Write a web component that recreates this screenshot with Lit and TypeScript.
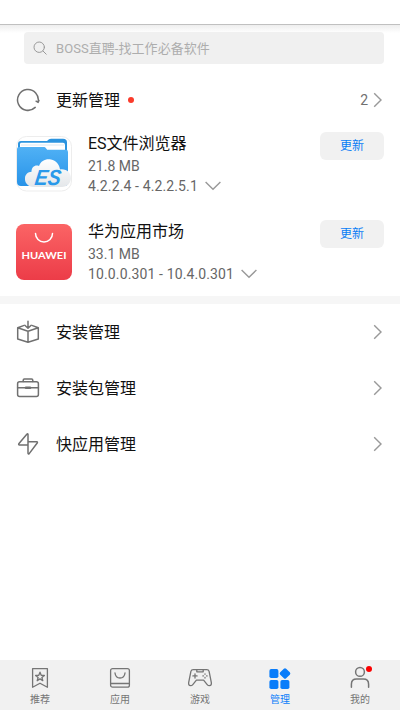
import { LitElement, html, css, svg } from "lit";
import { customElement, property } from "lit/decorators.js";

const line = (size: number, body: unknown, w = 1.3) => html`<svg
  width=${size} height=${size} viewBox="0 0 ${size} ${size}" fill="none"
  stroke="currentColor" stroke-width=${w} stroke-linecap="round" stroke-linejoin="round">${body}</svg>`;

const icons = {
  search: line(16, svg`<circle cx="7.2" cy="7.2" r="5.2"/><path d="M11 11L14.2 14.2"/>`, 1),
  refresh: line(24, svg`<path d="M19.2 19.4A10.4 10.4 0 1 1 22.1 14.2M20.1 13.2L22.1 14.4L22.9 12.4"/>`, 1.5),
  box: line(24, svg`<path d="M7.5 5.6L1.7 7.8V19L12 22.2L22.3 19V7.8L16.5 5.6M1.7 7.8L12 11.2L22.3 7.8M12 11.2V22.2M12 1.2V8M8.8 5.2L12 8.2L15.2 5.2"/>`, 1.5),
  bag: line(24, svg`<rect x="1.6" y="5.8" width="20.8" height="14.7" rx="2"/><path d="M7.2 5.5V4.3Q7.2 3 8.4 3H15.6Q16.8 3 16.8 4.3V5.5M1.6 11.7H22.4"/><path d="M10 11.8H14" stroke-width="2.6"/>`, 1.5),
  bolt: line(24, svg`<path d="M12 2.2Q11.7 1.4 10.8 2.2L2.8 11.7Q2.3 12.8 3.5 12.9H12ZM12 9.8H20.8Q21.8 10 21.2 11L13.2 21.6Q12.3 22.4 12 21.4Z"/>`, 1.5),
};

const tabIcons = [
  line(24, svg`<path d="M4.6 2.6H19.4V21.3L12 17.2L4.6 21.3Z"/><path d="M12 6.2L13.2 9.3L16.4 9.5L13.9 11.5L14.8 14.7L12 12.9L9.2 14.7L10.1 11.5L7.6 9.5L10.8 9.3Z"/>`),
  line(24, svg`<rect x="2.6" y="2.6" width="18.8" height="18.6" rx="2"/><path d="M2.6 17.5H21.4M7 7Q7.6 12 12 12T17 7"/>`),
  line(24, svg`<path d="M5.2 3.7H18.8Q20.6 3.7 21.1 5.4L23.3 16.4Q23.7 19.7 21.5 19.7Q20.1 19.7 19.2 18.6L15.6 14.2H8.4L4.8 18.6Q3.9 19.7 2.5 19.7Q.3 19.7 .7 16.4L2.9 5.4Q3.4 3.7 5.2 3.7Z"/><path d="M8.8 4V5.8H15.2V4"/><path d="M7 7.8V12M4.9 9.9H9.1M17 7.8V8.3M17 11.5V12M14.9 9.9H15.4M18.6 9.9H19.1"/>`),
  html`<svg width="24" height="24" viewBox="0 0 24 24" fill="currentColor"><rect x="1.4" y="3.1" width="9" height="9" rx="1.8"/><rect x="1.4" y="14" width="9" height="9" rx="1.8"/><rect x="12.4" y="14" width="9" height="9" rx="1.8"/><rect x="12.8" y="3.3" width="8.4" height="8.4" rx="1.6" transform="rotate(45 17 7.5)"/></svg>`,
  line(24, svg`<circle cx="12" cy="5.9" r="4.4"/><path d="M3.4 21.3V18.3Q3.4 13.1 8.6 13.1H15.4Q20.6 13.1 20.6 18.3V21.3"/>`, 1.5),
];

const esLogo = html`<svg width="56" height="56" viewBox="0 0 56 56">
  <defs>
    <linearGradient id="folder" x2="0" y2="1"><stop stop-color="#50b1f5"/><stop offset="1" stop-color="#2893e8"/></linearGradient>
    <linearGradient id="cloud" x2="0" y2="1"><stop stop-color="#fff"/><stop offset="1" stop-color="#e4e7ea"/></linearGradient>
  </defs>
  <rect x=".5" y=".5" width="55" height="54.5" rx="10" fill="#fff" stroke="#ededed"/>
  <path d="M2 14V8Q2 5 5 5H31Q33 2.8 35 2.8H47Q51 2.8 51 6.5V16H30Z" fill="#2c94df"/>
  <path d="M4 11V8.2Q4 6.8 5.5 6.8H47Q49 6.8 49 9V15H31L29 11.5Z" fill="#fff"/>
  <path d="M5 9H48" stroke="#cfe2f0" stroke-width=".8" fill="none"/>
  <path d="M1 13Q1 11 3 11H28Q29.5 11 31.2 13.8H50Q52 13.8 52 16V47Q52 50 48 50H5Q1 50 1 46Z" fill="url(#folder)"/>
  <path d="M18 51C11.5 51 8.5 46.5 9 41.8C9.3 38.5 12 36 15.5 35.8C15.5 30.5 19.5 28.5 23 30C25 24.5 30 22.5 35 23.5C40 24.5 43.5 28.5 44 33.5C50.5 32.5 55 37 55 42C55 47 51 51 46 51Z" fill="url(#cloud)"/>
  <text transform="translate(18 48.5) skewX(-8)" textLength="26" lengthAdjust="spacingAndGlyphs" font-family="Liberation Sans, sans-serif" font-style="italic" font-weight="700" font-size="22" fill="#2999ea">ES</text>
</svg>`;

const huaweiLogo = html`<svg width="56" height="56" viewBox="0 0 56 56">
  <defs><linearGradient id="red" x2="0" y2="1"><stop stop-color="#fb6465"/><stop offset="1" stop-color="#ec3c48"/></linearGradient></defs>
  <rect width="56" height="56" rx="8" fill="url(#red)"/>
  <path d="M19.5 9.5A8.5 8.5 0 0 0 36.5 9.5" fill="none" stroke="#fff" stroke-width="1.5" stroke-linecap="round"/>
  <text x="5.5" y="35.2" textLength="45" lengthAdjust="spacingAndGlyphs" font-family="Lato, sans-serif" font-weight="700" font-size="10" fill="#fff">HUAWEI</text>
</svg>`;

const chevron = html`<svg width="10" height="16" viewBox="0 0 10 16" fill="none" stroke="#999" stroke-width="1.4"><path d="M1.2 1.2L8 8L1.2 14.8"/></svg>`;
const expand = html`<svg width="16" height="10" viewBox="0 0 16 10" fill="none" stroke="#999" stroke-width="1.4"><path d="M.6 1L8 8.3L15.4 1"/></svg>`;

@customElement("menu-row")
class MenuRow extends LitElement {
  @property() label = "";
  @property() count = "";
  @property({ attribute: false }) icon: unknown;
  static styles = css`
    :host { display: flex; align-items: center; height: 56px; padding: 0 17px 0 16px; box-sizing: border-box; color: #707070; }
    svg { display: block; flex: none; }
    .label { margin-left: 16px; padding-top: 2px; font-size: 16px; line-height: 24px; color: #111; }
    .dot { width: 6px; height: 6px; border-radius: 50%; background: #fa3b2b; margin-left: 8px; }
    .count { margin-left: auto; margin-right: 5px; font-size: 14px; }
  `;
  render() {
    return html`${this.icon}<span class="label">${this.label}</span>
      ${this.count ? html`<i class="dot"></i>` : null}
      <span class="count">${this.count}</span>${chevron}`;
  }
}

@customElement("app-item")
class AppItem extends LitElement {
  @property() name = "";
  @property() size = "";
  @property() version = "";
  @property({ attribute: false }) logo: unknown;
  static styles = css`
    :host { display: flex; height: 88px; padding: 0 16px; box-sizing: border-box; }
    svg { display: block; flex: none; }
    .logo { margin-top: 8px; }
    .info { flex: 1; margin-left: 16px; padding-top: 4px; font-size: 14px; line-height: 20px; color: #666; }
    .name { font-size: 16px; line-height: 24px; color: #111; }
    .version { display: flex; align-items: center; gap: 7px; white-space: nowrap; letter-spacing: 0.13px; }
    .version svg { margin-top: -1px; }
    button { width: 64px; height: 28px; margin: 4px 0 0; padding: 0 0 3px; border: 0; border-radius: 6px; background: #f1f1f1; color: #0a7df5; font: 400 12px Roboto, "Noto Sans CJK SC", sans-serif; }
  `;
  render() {
    return html`<div class="logo">${this.logo}</div>
      <div class="info">
        <div class="name">${this.name}</div>
        <div>${this.size}</div>
        <div class="version"><span>${this.version}</span>${expand}</div>
      </div>
      <button>更新</button>`;
  }
}

@customElement("app-root")
class AppRoot extends LitElement {
  static styles = css`
    :host { display: flex; flex-direction: column; height: 710px; background: #fff; font-family: Roboto, "Noto Sans CJK SC", sans-serif; overflow: hidden; }
    svg { display: block; flex: none; }
    .status { height: 24px; flex: none; border-bottom: 1px solid #c0c0c0; }
    .top { height: 47px; flex: none; box-sizing: border-box; padding: 7px 16px 0 24px; background: linear-gradient(#eee, #fff 8px); }
    .search { display: flex; align-items: center; gap: 8px; height: 32px; padding-left: 8px; border-radius: 4px; background: #f0f0f0; font-size: 13px; letter-spacing: 0.06px; color: #adadad; }
    .search svg { color: #999; }
    .search span { margin-top: -1px; }
    main { flex: 1; }
    .apps { height: 168px; }
    .divider { height: 8px; background: #f6f6f6; }
    nav { display: grid; grid-template-columns: repeat(5, 1fr); height: 50px; flex: none; background: #f1f1f1; color: #757575; }
    .tab { position: relative; display: flex; flex-direction: column; align-items: center; padding-top: 6px; font-size: 10px; line-height: 16px; gap: 2px; }
    .active { color: #0a7dfa; }
    .badge { position: absolute; top: 6px; left: 46px; width: 6px; height: 6px; border-radius: 50%; background: #fa0000; }
  `;
  render() {
    return html`
      <div class="status"></div>
      <div class="top"><div class="search">${icons.search}<span>BOSS直聘-找工作必备软件</span></div></div>
      <main>
        <menu-row label="更新管理" count="2" .icon=${icons.refresh}></menu-row>
        <div class="apps">
          <app-item name="ES文件浏览器" size="21.8 MB" version="4.2.2.4 - 4.2.2.5.1" .logo=${esLogo}></app-item>
          <app-item name="华为应用市场" size="33.1 MB" version="10.0.0.301 - 10.4.0.301" .logo=${huaweiLogo}></app-item>
        </div>
        <div class="divider"></div>
        <menu-row label="安装管理" .icon=${icons.box}></menu-row>
        <menu-row label="安装包管理" .icon=${icons.bag}></menu-row>
        <menu-row label="快应用管理" .icon=${icons.bolt}></menu-row>
      </main>
      <nav>
        ${["推荐", "应用", "游戏", "管理", "我的"].map((t, i) => html`<div class="tab ${i === 3 ? "active" : ""}">
          ${tabIcons[i]}<span>${t}</span>${i === 4 ? html`<i class="badge"></i>` : null}</div>`)}
      </nav>`;
  }
}
